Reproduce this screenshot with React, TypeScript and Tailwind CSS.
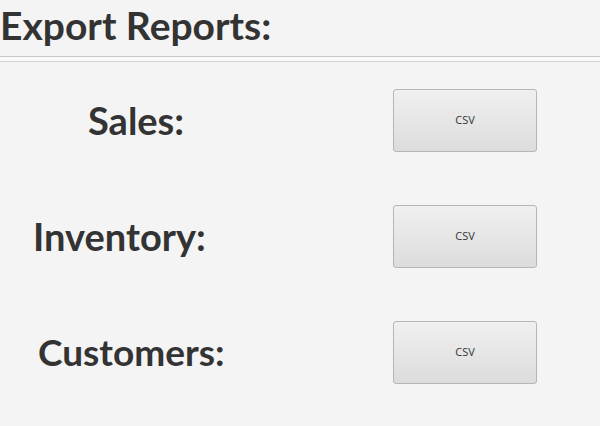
import React from 'react'

const rows = [
  { label: 'Sales:', pad: 'pl-[88px]', size: 'text-[38px]' },
  { label: 'Inventory:', pad: 'pl-[33px]', size: 'text-[38px]' },
  { label: 'Customers:', pad: 'pl-[38px]', size: 'text-[37px]' },
]

const App: React.FC = () => {
  return (
    <div className="w-[600px] h-[426px] bg-[#f4f4f4] text-[#333333] font-['Lato',sans-serif] overflow-hidden">
      <div className="h-[56px] flex items-start">
        <h1 className="text-[39px] font-bold leading-none mt-[6px]">Export Reports:</h1>
      </div>
      <div className="h-[6px] border-t border-b border-t-[#c8c8c8] border-b-[#d2d2d2] bg-[#f8f8f8]" />
      <div className="flex flex-col gap-[53px] pt-[27px]">
        {rows.map((r) => (
          <div key={r.label} className="flex items-center h-[63px]">
            <div className={`w-[393px] ${r.pad}`}>
              <span className={`${r.size} font-bold leading-none`}>{r.label}</span>
            </div>
            <button className="w-[144px] h-[63px] rounded-[3px] border border-[#b5b5b5] bg-gradient-to-b from-[#f0f0f0] to-[#dcdcdc] text-[11px] text-[#333333] font-['Open_Sans',sans-serif]">
              CSV
            </button>
          </div>
        ))}
      </div>
    </div>
  )
}

export default App
